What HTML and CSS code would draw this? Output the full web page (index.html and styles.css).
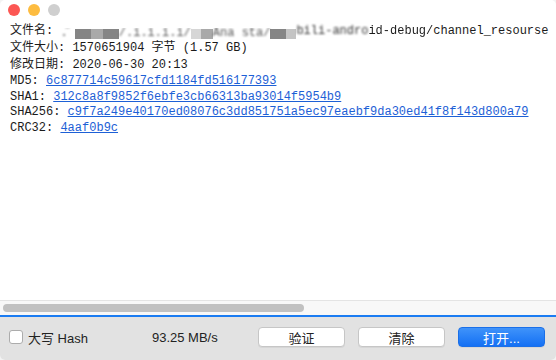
FILE: index.html
```html
<!DOCTYPE html>
<html lang="zh">
<head>
<meta charset="UTF-8">
<title>Hash</title>
<link rel="stylesheet" href="styles.css">
</head>
<body>

<div class="window">
  <div class="titlebar">
    <span class="light red"></span>
    <span class="light yellow"></span>
    <span class="light gray"></span>
  </div>

  <div class="content">
    <div class="line cjk">文件名: <span class="redact"><span class="blur">.&#776; </span><i class="m1"></i><i class="m2"></i><i class="m1"></i><span class="blur">/.i.i.i.i/</span><i class="m3"></i><i class="m2"></i><span class="blur">Ana sta/</span><i class="m1"></i><i class="m4"></i></span><span class="soft">bili-andro</span><span class="soft2">id-debug/</span>channel_resourse</div>
    <div class="line cjk">文件大小: 1570651904 字节 (1.57 GB)</div>
    <div class="line cjk">修改日期: 2020-06-30 20:13</div>
    <div class="line">MD5: <a href="#">6c877714c59617cfd1184fd516177393</a></div>
    <div class="line">SHA1: <a href="#">312c8a8f9852f6ebfe3cb66313ba93014f5954b9</a></div>
    <div class="line">SHA256: <a href="#">c9f7a249e40170ed08076c3dd851751a5ec97eaebf9da30ed41f8f143d800a79</a></div>
    <div class="line">CRC32: <a href="#">4aaf0b9c</a></div>
  </div>

  <div class="hscroll">
    <div class="thumb"></div>
  </div>
  <div class="accent"></div>

  <div class="footer">
    <label class="check"><span class="box"></span>大写 Hash</label>
    <span class="speed">93.25 MB/s</span>
    <div class="buttons">
      <button class="btn">验证</button>
      <button class="btn">清除</button>
      <button class="btn primary">打开...</button>
    </div>
  </div>
</div>

</body>
</html>
```

FILE: styles.css
```css
/* hash window */
html, body {
  margin: 0;
  height: 100%;
  background: #f3f3f3;
}

.window {
  height: 360px;
  display: flex;
  flex-direction: column;
  background: #fff;
  border-radius: 5px;
  overflow: hidden;
}

.titlebar {
  height: 22px;
  display: flex;
  align-items: center;
  gap: 8px;
  padding-left: 8px;
  flex-shrink: 0;
}

.light {
  width: 12px;
  height: 12px;
  border-radius: 50%;
  margin-top: -2px;
}
.light.red { background: #fc5753; }
.light.yellow { background: #fdbc40; }
.light.gray { background: #cfcfcf; }

.content {
  flex: 1;
  padding: 1px 0 0 10px;
  font-family: "Liberation Mono", "Noto Sans CJK SC", monospace;
  font-size: 12px;
  color: #1b1b1b;
  overflow: hidden;
}

/* lines with chinese text are a bit taller */
.line {
  white-space: pre;
  height: 15.5px;
  line-height: 15.5px;
}
.line.cjk {
  height: 17px;
  line-height: 17px;
}

.content a {
  color: #1d60d6;
  text-decoration: underline;
}

/* blurred part of the file name */
.redact {
  display: inline-flex;
  align-items: center;
  width: 236px;
  height: 12px;
  overflow: hidden;
  vertical-align: -2px;
}
.redact i {
  display: inline-block;
  height: 10px;
  flex-shrink: 0;
}
.blur {
  filter: blur(0.8px);
  color: #555;
  flex-shrink: 0;
}
.soft {
  filter: blur(0.9px);
  color: #333;
}
.soft2 {
  filter: blur(0.5px);
}
.m1 { width: 16px; background: #858585; }
.m2 { width: 12px; background: #a9a9a9; }
.m3 { width: 10px; background: #d6d6d6; }
.m4 { width: 10px; background: #c4c4c4; }

.hscroll {
  height: 14px;
  border-top: 1px solid #e4e4e4;
  background: #f8f8f8;
  display: flex;
  align-items: center;
  padding-left: 3px;
  flex-shrink: 0;
}

.thumb {
  width: 301px;
  height: 8px;
  border-radius: 4px;
  background: #c1c1c1;
}

.accent {
  height: 2px;
  background: #1b7cf2;
  flex-shrink: 0;
}

.footer {
  height: 40px;
  padding: 0 11px 3px 9px;
  background: #e2e2e2;
  display: flex;
  align-items: center;
  font-family: "Liberation Sans", "Noto Sans CJK SC", sans-serif;
  font-size: 13px;
  color: #222;
  flex-shrink: 0;
}

.check {
  display: flex;
  align-items: center;
  gap: 5px;
}

.box {
  width: 12px;
  height: 12px;
  background: #fff;
  border: 1px solid #acacac;
  border-radius: 3px;
}

.speed {
  margin-left: 64px;
}

.buttons {
  margin-left: auto;
  display: flex;
  gap: 13px;
}

.btn {
  width: 87px;
  height: 20px;
  padding: 0;
  background: #fff;
  border: 1px solid #c6c6c6;
  border-radius: 4px;
  font-family: "Liberation Sans", "Noto Sans CJK SC", sans-serif;
  font-size: 13px;
  color: #222;
  box-shadow: 0 1px 0 rgba(0, 0, 0, 0.05);
}

.btn.primary {
  color: #fff;
  border-color: #1a6fe8;
  background: linear-gradient(#3f93fa, #1470f4);
}
```
